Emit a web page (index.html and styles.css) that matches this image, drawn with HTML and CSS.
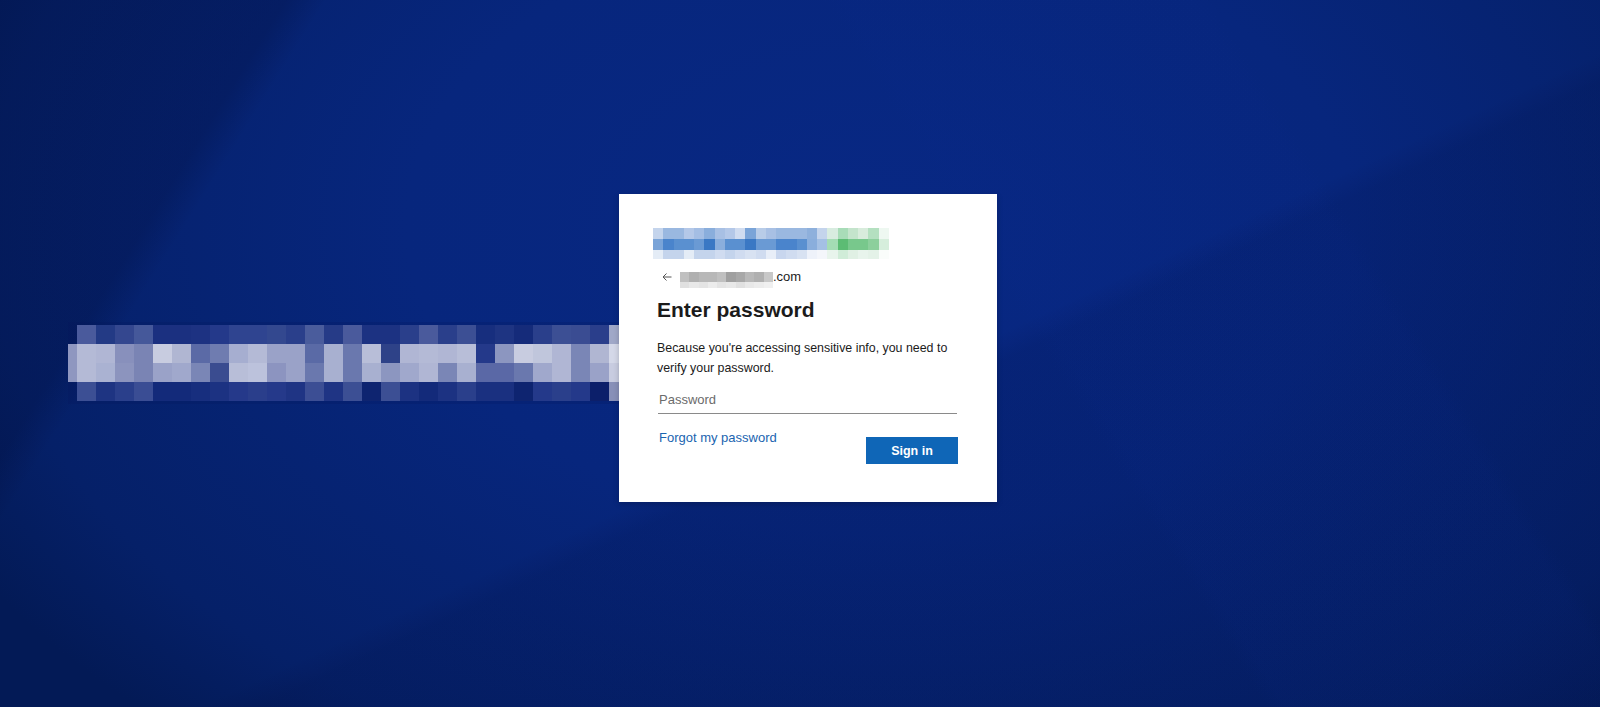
FILE: index.html
```html
<!DOCTYPE html>
<html lang="en">
<head>
    <meta charset="UTF-8">
    <meta name="viewport" content="width=device-width, initial-scale=1.0">
    <title>Sign in to your account</title>
    <link rel="stylesheet" href="styles.css">
</head>
<body>
    <main class="stage">
        <div class="banner">
            <div class="tiles banner-tiles" id="bannerTiles"></div>
        </div>

        <section class="card">
            <div class="tiles logo" id="logoTiles"></div>

            <div class="account">
                <svg class="back" viewBox="0 0 10 8" aria-hidden="true">
                    <path d="M9.5 4H1M4.5 0.5L1 4L4.5 7.5" fill="none" stroke="#555" stroke-width="1"/>
                </svg>
                <div class="tiles account-name" id="accountTiles"></div>
                <span class="domain">.com</span>
            </div>

            <h1 class="title">Enter password</h1>
            <p class="note">Because you're accessing sensitive info, you need to verify your password.</p>

            <input class="field" type="password" placeholder="Password">

            <div class="actions">
                <a class="forgot" href="#">Forgot my password</a>
                <button class="submit">Sign in</button>
            </div>
        </section>
    </main>

    <script>
        // Pixelated blocks (tenant banner, logo, account name), one row per string
        // "none" leaves a cell empty so the page background shows through
        const bannerRows = [
            "none 4a5a9c 233a85 34478f 45589a 1b3080 1b3080 1d3282 24398a 2f4490 2f4490 33488f 2a3f8b 4a5c9c 263b87 4a5a9c 1c3282 1c3282 2a3f8b 4a5a9c 2a3f8b 3c4f94 172e7e 1e3482 152b7a 2a3f8b 3c4f94 3a4c92 2a3e8b a0a8c8",
            "8f97c0 b4bad6 b0b6d4 8890bc 7a84b4 c8cce0 b0b6d2 5b6aa6 6f7cb0 a6aed0 b4bad6 9aa2c8 9aa2c8 5a6aa6 a8b0d0 6a78ae b8bed8 2e4288 b0b6d4 b4bad6 b0b6d4 b8bed8 24398a 8c96c0 c8cce0 c0c6dc b0b6d4 7a86b6 b0b6d2 d4d8e8",
            "8f97c0 b4bad6 aab2d2 8c94be 7a84b4 9aa2c8 a0a8cc 7a86b6 3a4c90 b8bed8 bcc2dc 8c94c0 9aa2c8 6a78ae a8b0d0 6a78ae a8b0d0 8c96c0 a0a8cc b0b6d4 7a86b6 a8b0d0 5a68a6 5a68a6 6a78ae a0a8cc b0b6d4 7a86b6 9aa2c8 c8cce0",
            "none 3c4f94 1e3482 2a3f8b 3a4d94 132a7a 132a7a 172e7e 1c3282 25398a 2a3e8b 25398a 1f3484 3c4e94 1f3484 3c4f94 0e2470 3c4f94 1c3282 132a7a 1c3282 2a3f8b 1a3080 1a3080 0e2470 24398a 2a3f8b 24398a 0c1f6a 8890b8"
        ];

        const logoRows = [
            "c4d4ec 9ab8e0 9ab8e0 b4c8e8 a4bee4 8aaedc a8c0e4 b4c8e8 d0dcf0 7aa4d8 b8cce8 a8c0e4 9ab8e0 9ab8e0 9ab8e0 8eb0dc c4d4ec d8ece0 a8dcb8 c4e4cc d8ecdc b4e0c0 eef8f1",
            "7aa4d8 4a84cc 5a90d0 5a90d0 6a9ad4 3a78c4 8aaedc 5a90d0 5a90d0 3a78c4 6a9ad4 6a9ad4 4a84cc 4a84cc 5a90d0 8aaedc a4c0e4 a4dcb4 5cbc74 78c88c 78c88c 8ccf9c d6eedc",
            "e4ecf6 c4d4ec c4d4ec e4ecf6 c4d4ec c4d4ec d0dcf0 c4d4ec d0dcf0 d8e2f2 d0dcf0 e8eef8 c8d6ee d0dcf0 d8e2f2 eef2fa f4f6fb e8f4ec d0ecd8 e0f0e4 e8f4ec e4f2e8 fafdfb"
        ];

        const accountRows = [
            "c0c0c0 b0b0b0 b8b8b8 b8b8b8 c0c0c0 a0a0a0 a8a8a8 b8b8b8 b0b0b0 c8c8c8",
            "e0e0e0 e8e8e8 e4e4e4 ececec e4e4e4 e8e8e8 e0e0e0 e8e8e8 ececec f0f0f0"
        ];

        function fillTiles(id, rows) {
            const grid = document.getElementById(id);
            rows.forEach(row => {
                row.split(" ").forEach(hex => {
                    const tile = document.createElement("span");
                    if (hex !== "none") tile.style.background = "#" + hex;
                    grid.appendChild(tile);
                });
            });
        }

        fillTiles("bannerTiles", bannerRows);
        fillTiles("logoTiles", logoRows);
        fillTiles("accountTiles", accountRows);
    </script>
</body>
</html>
```

FILE: styles.css
```css
html, body {
    margin: 0;
    height: 100%;
}

body {
    font-family: "Liberation Sans", Arial, sans-serif;
    color: #1b1b1b;
    overflow: hidden;
    background:
        linear-gradient(122deg, rgba(0, 6, 40, 0.2) 0 14%, transparent 16%),
        linear-gradient(58deg, transparent 0 62%, rgba(10, 40, 140, 0.08) 63% 80%, transparent 81%),
        linear-gradient(155deg, transparent 0 55%, rgba(0, 8, 50, 0.12) 57%),
        radial-gradient(ellipse 1050px 680px at 55% 32%, #082884 0%, #07267d 45%, #052068 85%, #031a56 100%);
}

.stage {
    display: flex;
    align-items: flex-start;
    padding: 194px 0 0 68px;
}

/* pixel blocks */
.tiles {
    display: grid;
}

.tiles span {
    display: block;
}

.banner {
    margin-top: 128px;
    padding: 3px 0;
    background: rgba(5, 22, 90, 0.2);
}

.banner-tiles {
    grid-template-columns: 9px repeat(28, 19px) 10px;
    grid-auto-rows: 19px;
}

.card {
    width: 378px;
    box-sizing: border-box;
    padding: 34px 39px 38px 38px;
    background: #fff;
    box-shadow: 0 2px 6px rgba(0, 0, 0, 0.2);
}

.logo {
    grid-template-columns: repeat(23, 10.25px);
    grid-template-rows: 11px 11px 9px;
    margin-left: -4px;
    filter: blur(0.4px);
}

.account {
    display: flex;
    align-items: flex-start;
    height: 16px;
    margin: 10px 0 0 5px;
    font-size: 13px;
    line-height: 16px;
}

.back {
    width: 10px;
    height: 8px;
    margin: 4px 8px 0 0;
}

.account-name {
    grid-template-columns: repeat(10, 9.3px);
    grid-template-rows: 10px 6px;
    margin-top: 3px;
    filter: blur(0.4px);
}

.domain {
    color: #1b1b1b;
}

.title {
    margin: 12px 0 0;
    font-size: 21px;
    line-height: 26px;
    font-weight: 700;
}

.note {
    margin: 15px 0 0;
    font-size: 12.4px;
    line-height: 20px;
}

.field {
    display: block;
    width: 299px;
    height: 29px;
    margin: 7px 0 0 1px;
    padding: 6px 1px;
    box-sizing: border-box;
    border: none;
    border-bottom: 1px solid #8a8a8a;
    background: transparent;
    font: 13px/16px "Liberation Sans", Arial, sans-serif;
    color: #1b1b1b;
    outline: none;
}

.field::placeholder {
    color: #6b6b6b;
}

.actions {
    display: flex;
    justify-content: space-between;
    align-items: flex-start;
    margin-top: 16px;
}

.forgot {
    margin-left: 2px;
    font-size: 13px;
    line-height: 16px;
    color: #1a64b0;
    text-decoration: none;
}

.submit {
    width: 92px;
    height: 27px;
    margin-top: 7px;
    border: none;
    background: #0f66b7;
    color: #fff;
    font: 700 12.5px "Liberation Sans", Arial, sans-serif;
    cursor: pointer;
}
```
